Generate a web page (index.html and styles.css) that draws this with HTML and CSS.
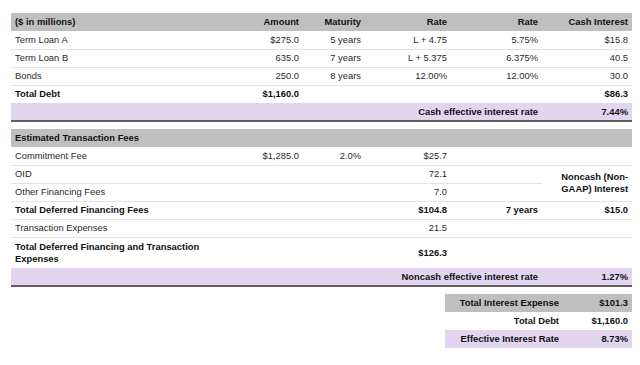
FILE: index.html
```html
<!DOCTYPE html>
<html>
<head>
<meta charset="utf-8">
<link rel="stylesheet" href="styles.css">
</head>
<body>
<div class="page">
  <table class="fin">
    <colgroup>
      <col class="c-label"><col class="c-amt"><col class="c-mat"><col class="c-rate"><col class="c-rate2"><col class="c-cash">
    </colgroup>
    <thead>
      <tr class="head">
        <th class="l">($ in millions)</th><th>Amount</th><th>Maturity</th><th>Rate</th><th>Rate</th><th>Cash Interest</th>
      </tr>
    </thead>
    <tbody>
      <tr><td class="l">Term Loan A</td><td>$275.0</td><td>5 years</td><td>L + 4.75</td><td>5.75%</td><td>$15.8</td></tr>
      <tr><td class="l">Term Loan B</td><td>635.0</td><td>7 years</td><td>L + 5.375</td><td>6.375%</td><td>40.5</td></tr>
      <tr><td class="l">Bonds</td><td>250.0</td><td>8 years</td><td>12.00%</td><td>12.00%</td><td>30.0</td></tr>
      <tr class="b"><td class="l">Total Debt</td><td>$1,160.0</td><td></td><td></td><td></td><td>$86.3</td></tr>
      <tr class="purple b end"><td></td><td></td><td></td><td colspan="2">Cash effective interest rate</td><td>7.44%</td></tr>
    </tbody>
  </table>

  <table class="fin second">
    <colgroup>
      <col class="c-label"><col class="c-amt"><col class="c-mat"><col class="c-rate"><col class="c-rate2"><col class="c-cash">
    </colgroup>
    <thead>
      <tr class="head"><th class="l" colspan="6">Estimated Transaction Fees</th></tr>
    </thead>
    <tbody>
      <tr><td class="l">Commitment Fee</td><td>$1,285.0</td><td>2.0%</td><td>$25.7</td><td></td><td></td></tr>
      <tr class="nobot"><td class="l">OID</td><td></td><td></td><td>72.1</td><td></td><td rowspan="2" class="b merged">Noncash (Non-<br>GAAP) Interest</td></tr>
      <tr><td class="l">Other Financing Fees</td><td></td><td></td><td>7.0</td><td></td></tr>
      <tr class="b"><td class="l">Total Deferred Financing Fees</td><td></td><td></td><td>$104.8</td><td>7 years</td><td>$15.0</td></tr>
      <tr><td class="l">Transaction Expenses</td><td></td><td></td><td>21.5</td><td></td><td></td></tr>
      <tr class="b tall"><td class="l" colspan="3">Total Deferred Financing and Transaction<br>Expenses</td><td>$126.3</td><td></td><td></td></tr>
      <tr class="purple b end"><td></td><td></td><td></td><td colspan="2">Noncash effective interest rate</td><td>1.27%</td></tr>
    </tbody>
  </table>

  <div class="summary-wrap">
    <table class="summary">
      <tr class="head b"><td>Total Interest Expense</td><td>$101.3</td></tr>
      <tr class="b"><td>Total Debt</td><td>$1,160.0</td></tr>
      <tr class="purple b"><td>Effective Interest Rate</td><td>8.73%</td></tr>
    </table>
  </div>
</div>
</body>
</html>
```

FILE: styles.css
```css
html, body {
  margin: 0;
  padding: 0;
  background: #ffffff;
}

body {
  font-family: "Liberation Sans", Arial, sans-serif;
  font-size: 9.4px;
  color: #2a2a2a;
}

.page {
  padding: 13px 8px 0 11px;
  width: 621px;
}

table {
  border-collapse: collapse;
  table-layout: fixed;
}

.fin {
  width: 621px;
}

.c-label { width: 219px; }
.c-amt { width: 73px; }
.c-mat { width: 62px; }
.c-rate { width: 86px; }
.c-rate2 { width: 91px; }
.c-cash { width: 90px; }

th, td {
  height: 18px;
  box-sizing: border-box;
  padding: 0 4px;
  line-height: 12px;
  text-align: right;
  vertical-align: middle;
  white-space: nowrap;
}

th {
  font-weight: bold;
  color: #111;
}

.l {
  text-align: left;
  padding-left: 4px;
}

.head th, .head td {
  background: #bfbfbf;
  color: #111;
  font-weight: bold;
}

tbody td {
  border-top: 1px solid #e3e3e3;
}

tbody tr:first-child td {
  border-top: none;
}

.b td {
  font-weight: bold;
  color: #111;
}

td.b {
  font-weight: bold;
  color: #111;
}

.purple td {
  background: #e2d5f0;
  border-top: none;
}

.end td {
  border-bottom: 2px solid #5f5f5f;
}

.tall td {
  height: 31px;
  white-space: normal;
}

.merged {
  white-space: normal;
  vertical-align: middle;
}

.second {
  margin-top: 7px;
}

.summary-wrap {
  display: flex;
  justify-content: flex-end;
  margin-top: 7px;
}

.summary {
  width: 187px;
}

.summary td {
  border: none;
}

.summary td:first-child {
  width: 118px;
}
```
